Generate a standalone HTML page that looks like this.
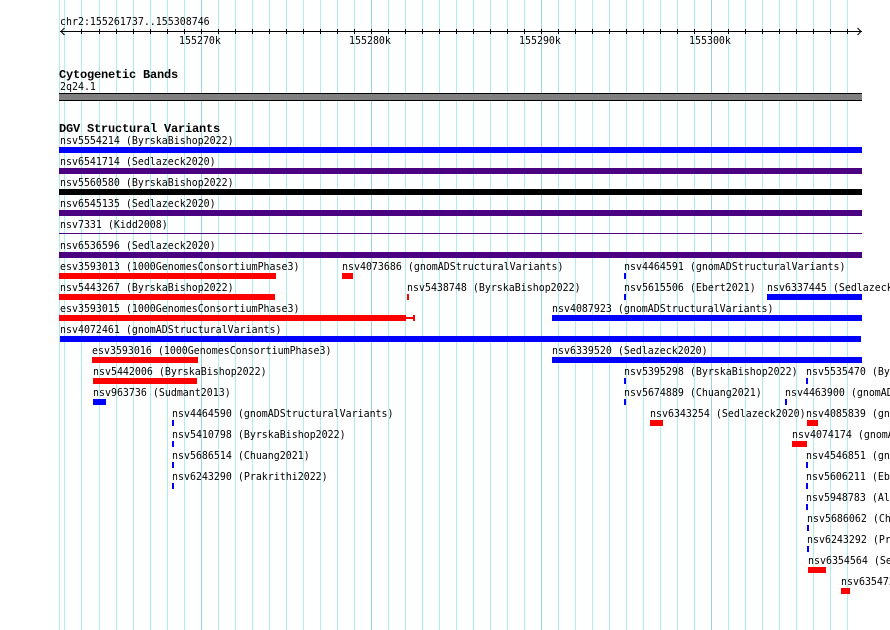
<!DOCTYPE html>
<html>
<head>
<meta charset="utf-8">
<style>
html,body{margin:0;padding:0;background:#fff;width:890px;height:630px;overflow:hidden}
svg{display:block}
text{font-family:"DejaVu Sans Mono","Liberation Mono",monospace;font-size:9.96px;fill:#000;white-space:pre}
text.b{font-family:"Liberation Mono","DejaVu Sans Mono",monospace;font-size:12px;font-weight:bold;letter-spacing:-.2px}
rect,path{shape-rendering:crispEdges}
</style>
</head>
<body>
<svg width="890" height="630" viewBox="0 0 890 630" xmlns="http://www.w3.org/2000/svg">
<path fill="none" stroke="#afeeee" stroke-width="1" d="M59.5 0V630M64.5 0V630M81.5 0V630M99.5 0V630M116.5 0V630M133.5 0V630M150.5 0V630M167.5 0V630M184.5 0V630M218.5 0V630M235.5 0V630M252.5 0V630M269.5 0V630M286.5 0V630M303.5 0V630M320.5 0V630M337.5 0V630M354.5 0V630M388.5 0V630M405.5 0V630M422.5 0V630M439.5 0V630M456.5 0V630M473.5 0V630M490.5 0V630M507.5 0V630M524.5 0V630M558.5 0V630M575.5 0V630M592.5 0V630M609.5 0V630M626.5 0V630M643.5 0V630M660.5 0V630M677.5 0V630M694.5 0V630M728.5 0V630M745.5 0V630M762.5 0V630M779.5 0V630M796.5 0V630M813.5 0V630M830.5 0V630M847.5 0V630"/>
<path fill="none" stroke="#9ad0ea" stroke-width="1" d="M201.5 0V630M371.5 0V630M541.5 0V630M711.5 0V630"/>

<!-- ruler -->
<rect x="60" y="31" width="802" height="1" fill="#000"/>
<path fill="none" stroke="#000" stroke-width="1" d="M81.5 29V34M99.5 29V34M116.5 29V34M133.5 29V34M150.5 29V34M167.5 29V34M184.5 29V34M201.5 29V34M218.5 29V34M235.5 29V34M252.5 29V34M269.5 29V34M286.5 29V34M303.5 29V34M320.5 29V34M337.5 29V34M354.5 29V34M371.5 29V34M388.5 29V34M405.5 29V34M422.5 29V34M439.5 29V34M456.5 29V34M473.5 29V34M490.5 29V34M507.5 29V34M524.5 29V34M541.5 29V34M558.5 29V34M575.5 29V34M592.5 29V34M609.5 29V34M626.5 29V34M643.5 29V34M660.5 29V34M677.5 29V34M694.5 29V34M711.5 29V34M728.5 29V34M745.5 29V34M762.5 29V34M779.5 29V34M796.5 29V34M813.5 29V34M830.5 29V34M847.5 29V34"/>
<path fill="none" stroke="#000" stroke-width="1" style="shape-rendering:auto" d="M64.5 28L61 31.5L64.5 35M857.5 28L861 31.5L857.5 35"/>
<text transform="translate(60,25) scale(1,1.1)">chr2:155261737..155308746</text>
<text transform="translate(179,44) scale(1,1.1)">155270k</text>
<text transform="translate(349,44) scale(1,1.1)">155280k</text>
<text transform="translate(519,44) scale(1,1.1)">155290k</text>
<text transform="translate(689,44) scale(1,1.1)">155300k</text>

<!-- cytobands -->
<text class="b" x="59" y="78">Cytogenetic Bands</text>
<text transform="translate(60,90) scale(1,1.1)">2q24.1</text>
<rect x="59" y="93" width="803" height="8" fill="#000"/>
<rect x="59" y="94" width="803" height="6" fill="#808080"/>

<!-- DGV -->
<text class="b" x="59" y="132">DGV Structural Variants</text>

<g fill="#0000ff">
<rect x="59" y="147" width="803" height="6"/>
<rect x="624" y="273" width="2" height="6"/>
<rect x="624" y="294" width="2" height="6"/>
<rect x="767" y="294" width="95" height="6"/>
<rect x="552" y="315" width="310" height="6"/>
<rect x="60" y="336" width="801" height="6"/>
<rect x="552" y="357" width="310" height="6"/>
<rect x="624" y="378" width="2" height="6"/>
<rect x="806" y="378" width="2" height="6"/>
<rect x="93" y="399" width="13" height="6"/>
<rect x="624" y="399" width="2" height="6"/>
<rect x="785" y="399" width="2" height="6"/>
<rect x="172" y="420" width="2" height="6"/>
<rect x="172" y="441" width="2" height="6"/>
<rect x="172" y="462" width="2" height="6"/>
<rect x="172" y="483" width="2" height="6"/>
<rect x="806" y="462" width="2" height="6"/>
<rect x="806" y="483" width="2" height="6"/>
<rect x="806" y="504" width="2" height="6"/>
<rect x="807" y="525" width="2" height="6"/>
<rect x="807" y="546" width="2" height="6"/>
</g>
<g fill="#4b0082">
<rect x="59" y="168" width="803" height="6"/>
<rect x="59" y="210" width="803" height="6"/>
<rect x="59" y="233" width="803" height="1"/>
<rect x="59" y="252" width="803" height="6"/>
</g>
<rect x="59" y="189" width="803" height="6" fill="#000"/>
<g fill="#ff0000">
<rect x="59" y="273" width="217" height="6"/>
<rect x="342" y="273" width="11" height="6"/>
<rect x="59" y="294" width="216" height="6"/>
<rect x="407" y="294" width="2" height="6"/>
<rect x="59" y="315" width="347" height="6"/>
<rect x="406" y="317" width="9" height="2"/>
<rect x="413" y="315" width="2" height="6"/>
<rect x="92" y="357" width="106" height="6"/>
<rect x="93" y="378" width="104" height="6"/>
<rect x="650" y="420" width="13" height="6"/>
<rect x="807" y="420" width="11" height="6"/>
<rect x="792" y="441" width="15" height="6"/>
<rect x="808" y="567" width="18" height="6"/>
<rect x="841" y="588" width="9" height="6"/>
</g>

<text transform="translate(60,144) scale(1,1.1)">nsv5554214 (ByrskaBishop2022)</text>
<text transform="translate(60,165) scale(1,1.1)">nsv6541714 (Sedlazeck2020)</text>
<text transform="translate(60,186) scale(1,1.1)">nsv5560580 (ByrskaBishop2022)</text>
<text transform="translate(60,207) scale(1,1.1)">nsv6545135 (Sedlazeck2020)</text>
<text transform="translate(60,228) scale(1,1.1)">nsv7331 (Kidd2008)</text>
<text transform="translate(60,249) scale(1,1.1)">nsv6536596 (Sedlazeck2020)</text>
<text transform="translate(60,270) scale(1,1.1)">esv3593013 (1000GenomesConsortiumPhase3)</text>
<text transform="translate(342,270) scale(1,1.1)">nsv4073686 (gnomADStructuralVariants)</text>
<text transform="translate(624,270) scale(1,1.1)">nsv4464591 (gnomADStructuralVariants)</text>
<text transform="translate(60,291) scale(1,1.1)">nsv5443267 (ByrskaBishop2022)</text>
<text transform="translate(407,291) scale(1,1.1)">nsv5438748 (ByrskaBishop2022)</text>
<text transform="translate(624,291) scale(1,1.1)">nsv5615506 (Ebert2021)</text>
<text transform="translate(767,291) scale(1,1.1)">nsv6337445 (Sedlazeck2020)</text>
<text transform="translate(60,312) scale(1,1.1)">esv3593015 (1000GenomesConsortiumPhase3)</text>
<text transform="translate(552,312) scale(1,1.1)">nsv4087923 (gnomADStructuralVariants)</text>
<text transform="translate(60,333) scale(1,1.1)">nsv4072461 (gnomADStructuralVariants)</text>
<text transform="translate(92,354) scale(1,1.1)">esv3593016 (1000GenomesConsortiumPhase3)</text>
<text transform="translate(552,354) scale(1,1.1)">nsv6339520 (Sedlazeck2020)</text>
<text transform="translate(93,375) scale(1,1.1)">nsv5442006 (ByrskaBishop2022)</text>
<text transform="translate(624,375) scale(1,1.1)">nsv5395298 (ByrskaBishop2022)</text>
<text transform="translate(806,375) scale(1,1.1)">nsv5535470 (ByrskaBishop2022)</text>
<text transform="translate(93,396) scale(1,1.1)">nsv963736 (Sudmant2013)</text>
<text transform="translate(624,396) scale(1,1.1)">nsv5674889 (Chuang2021)</text>
<text transform="translate(785,396) scale(1,1.1)">nsv4463900 (gnomADStructuralVariants)</text>
<text transform="translate(172,417) scale(1,1.1)">nsv4464590 (gnomADStructuralVariants)</text>
<text transform="translate(650,417) scale(1,1.1)">nsv6343254 (Sedlazeck2020)</text>
<text transform="translate(806,417) scale(1,1.1)">nsv4085839 (gnomADStructuralVariants)</text>
<text transform="translate(172,438) scale(1,1.1)">nsv5410798 (ByrskaBishop2022)</text>
<text transform="translate(792,438) scale(1,1.1)">nsv4074174 (gnomADStructuralVariants)</text>
<text transform="translate(172,459) scale(1,1.1)">nsv5686514 (Chuang2021)</text>
<text transform="translate(806,459) scale(1,1.1)">nsv4546851 (gnomADStructuralVariants)</text>
<text transform="translate(172,480) scale(1,1.1)">nsv6243290 (Prakrithi2022)</text>
<text transform="translate(806,480) scale(1,1.1)">nsv5606211 (Ebert2021)</text>
<text transform="translate(806,501) scale(1,1.1)">nsv5948783 (Almarri2020)</text>
<text transform="translate(807,522) scale(1,1.1)">nsv5686062 (Chuang2021)</text>
<text transform="translate(807,543) scale(1,1.1)">nsv6243292 (Prakrithi2022)</text>
<text transform="translate(808,564) scale(1,1.1)">nsv6354564 (Sedlazeck2020)</text>
<text transform="translate(841,585) scale(1,1.1)">nsv6354728 (Sedlazeck2020)</text>
</svg>
</body>
</html>
